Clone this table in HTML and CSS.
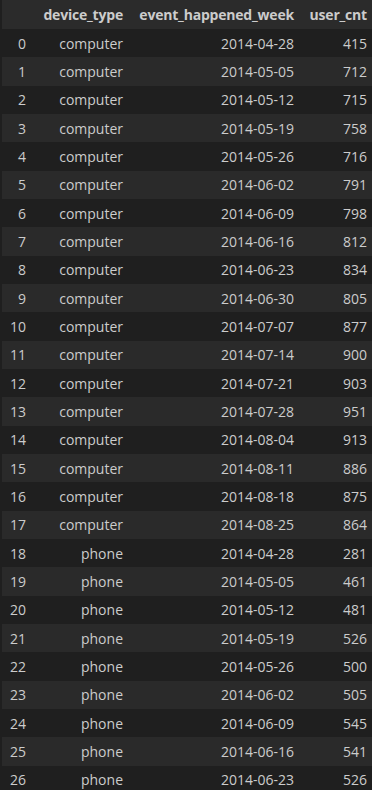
FILE: index.html
```html
<!DOCTYPE html>
<html>
<head>
<meta charset="utf-8">
<link rel="stylesheet" href="styles.css">
</head>
<body>
<div class="table">
  <div class="row head"><span></span><span>device_type</span><span>event_happened_week</span><span>user_cnt</span></div>
  <div class="row"><span>0</span><span>computer</span><span>2014-04-28</span><span>415</span></div>
  <div class="row"><span>1</span><span>computer</span><span>2014-05-05</span><span>712</span></div>
  <div class="row"><span>2</span><span>computer</span><span>2014-05-12</span><span>715</span></div>
  <div class="row"><span>3</span><span>computer</span><span>2014-05-19</span><span>758</span></div>
  <div class="row"><span>4</span><span>computer</span><span>2014-05-26</span><span>716</span></div>
  <div class="row"><span>5</span><span>computer</span><span>2014-06-02</span><span>791</span></div>
  <div class="row"><span>6</span><span>computer</span><span>2014-06-09</span><span>798</span></div>
  <div class="row"><span>7</span><span>computer</span><span>2014-06-16</span><span>812</span></div>
  <div class="row"><span>8</span><span>computer</span><span>2014-06-23</span><span>834</span></div>
  <div class="row"><span>9</span><span>computer</span><span>2014-06-30</span><span>805</span></div>
  <div class="row"><span>10</span><span>computer</span><span>2014-07-07</span><span>877</span></div>
  <div class="row"><span>11</span><span>computer</span><span>2014-07-14</span><span>900</span></div>
  <div class="row"><span>12</span><span>computer</span><span>2014-07-21</span><span>903</span></div>
  <div class="row"><span>13</span><span>computer</span><span>2014-07-28</span><span>951</span></div>
  <div class="row"><span>14</span><span>computer</span><span>2014-08-04</span><span>913</span></div>
  <div class="row"><span>15</span><span>computer</span><span>2014-08-11</span><span>886</span></div>
  <div class="row"><span>16</span><span>computer</span><span>2014-08-18</span><span>875</span></div>
  <div class="row"><span>17</span><span>computer</span><span>2014-08-25</span><span>864</span></div>
  <div class="row"><span>18</span><span>phone</span><span>2014-04-28</span><span>281</span></div>
  <div class="row"><span>19</span><span>phone</span><span>2014-05-05</span><span>461</span></div>
  <div class="row"><span>20</span><span>phone</span><span>2014-05-12</span><span>481</span></div>
  <div class="row"><span>21</span><span>phone</span><span>2014-05-19</span><span>526</span></div>
  <div class="row"><span>22</span><span>phone</span><span>2014-05-26</span><span>500</span></div>
  <div class="row"><span>23</span><span>phone</span><span>2014-06-02</span><span>505</span></div>
  <div class="row"><span>24</span><span>phone</span><span>2014-06-09</span><span>545</span></div>
  <div class="row"><span>25</span><span>phone</span><span>2014-06-16</span><span>541</span></div>
  <div class="row"><span>26</span><span>phone</span><span>2014-06-23</span><span>526</span></div>
</div>
</body>
</html>
```
FILE: styles.css
```css
html, body {
  margin: 0;
  padding: 0;
  background: #1f1f1f;
  overflow: hidden;
}
body {
  font-family: "Open Sans", "Noto Sans", sans-serif;
  font-size: 14px;
  color: #cccccc;
}
.table {
  margin-left: 2px;
}
.row {
  display: grid;
  grid-template-columns: 29px 97px 171px 73px;
  height: 28.33px;
  align-items: center;
}
.row span {
  text-align: right;
  padding-right: 5px;
  white-space: nowrap;
}
.row.head {
  height: 29px;
  background: #2b2b2b;
  font-weight: bold;
  letter-spacing: -0.2px;
}
.row:nth-child(odd):not(.head) {
  background: #2a2a2a;
}
```
